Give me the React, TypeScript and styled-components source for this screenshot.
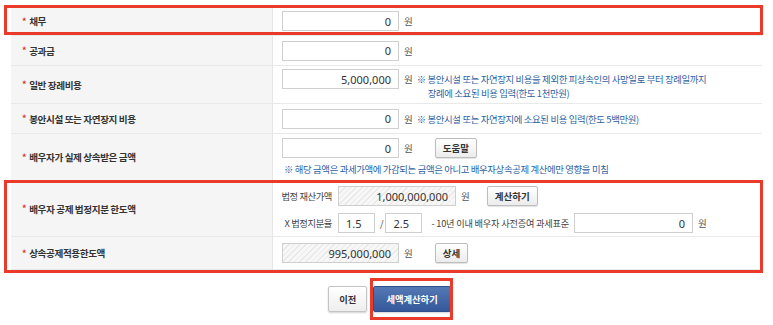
import React from 'react';
import styled, { createGlobalStyle } from 'styled-components';

const GlobalStyle = createGlobalStyle`
  body {
    margin: 0;
    background: #fff;
    font-family: "Noto Sans CJK KR", "Noto Sans", sans-serif;
    color: #333;
  }
`;

const Page = styled.div`
  position: relative;
  width: 773px;
  height: 325px;
  padding: 7px 11px 0 11px;
  box-sizing: border-box;
`;

const Table = styled.div`
  display: flex;
  flex-direction: column;
  width: 751px;
`;

const Row = styled.div<{ $h: number }>`
  display: flex;
  height: ${p => p.$h}px;
  border-bottom: 1px solid #e9e9e9;
  box-sizing: border-box;
`;

const LabelCell = styled.div`
  width: 262px;
  flex: none;
  background: #f5f5f5;
  border-right: 1px solid #e6e6e6;
  display: flex;
  align-items: center;
  padding-left: 11px;
  box-sizing: border-box;
  font-size: 9.6px;
  letter-spacing: -0.4px;
  font-weight: 700;
  color: #333;
`;

const Star = styled.span`
  color: #d9342b;
  font-size: 9px;
  margin-right: 3px;
`;

const ValueCell = styled.div`
  flex: 1;
  display: flex;
  flex-direction: column;
  justify-content: center;
  gap: 6px;
  padding-left: 9px;
`;

const Line = styled.div<{ $top?: boolean }>`
  display: flex;
  align-items: ${p => (p.$top ? 'flex-start' : 'center')};
`;

const Input = styled.div<{ $w?: number; $hatch?: boolean; $left?: boolean }>`
  width: ${p => p.$w ?? 117}px;
  height: 20px;
  box-sizing: border-box;
  border: 1px solid #cfcfcf;
  background: ${p =>
    p.$hatch
      ? 'repeating-linear-gradient(135deg, #e9e9e9 0 1px, #f7f7f7 1px 4px)'
      : '#fff'};
  display: flex;
  align-items: center;
  justify-content: ${p => (p.$left ? 'flex-start' : 'flex-end')};
  padding: 0 7px;
  font-family: "Noto Sans", sans-serif;
  font-size: 11px;
  color: #333;
  flex: none;
`;

const Unit = styled.span`
  font-size: 9.5px;
  color: #555;
  margin-left: 5px;
  line-height: 20px;
`;

const Note = styled.div<{ $indent?: boolean }>`
  font-size: 9.4px;
  letter-spacing: -0.35px;
  color: #2c5fa3;
  line-height: 14px;
  white-space: nowrap;
  padding-left: ${p => (p.$indent ? '11px' : '0')};
`;

const NoteBlock = styled.div`
  margin-left: 4px;
`;

const SmallButton = styled.div<{ $ml?: number }>`
  height: 20px;
  box-sizing: border-box;
  padding: 0 7px;
  margin-left: ${p => p.$ml ?? 0}px;
  border: 1px solid #bdbdbd;
  border-radius: 2px;
  background: linear-gradient(#ffffff, #ececec);
  box-shadow: 0 1px 1px rgba(0, 0, 0, 0.12);
  display: flex;
  align-items: center;
  font-size: 9.5px;
  font-weight: 700;
  color: #333;
`;

const SubLabel = styled.span<{ $w: number }>`
  width: ${p => p.$w}px;
  flex: none;
  font-size: 9.3px;
  letter-spacing: -0.4px;
  color: #444;
  white-space: nowrap;
  text-align: right;
  padding-right: 6px;
  box-sizing: border-box;
`;

const Text = styled.span<{ $ml?: number }>`
  font-size: 9.2px;
  letter-spacing: -0.2px;
  white-space: nowrap;
  color: #444;
  margin-left: ${p => p.$ml ?? 0}px;
  margin-right: 5px;
`;

const Actions = styled.div`
  display: flex;
  justify-content: center;
  gap: 6px;
  margin-top: 16px;
  padding-left: 6px;
`;

const ActionButton = styled.div<{ $primary?: boolean }>`
  height: 26px;
  box-sizing: border-box;
  padding: 0 ${p => (p.$primary ? 12 : 10)}px;
  border-radius: 2px;
  display: flex;
  align-items: center;
  font-size: 9.3px;
  font-weight: 700;
  color: ${p => (p.$primary ? '#fff' : '#333')};
  border: 1px solid ${p => (p.$primary ? '#2d4f8a' : '#c4c4c4')};
  background: ${p =>
    p.$primary ? 'linear-gradient(#5479b4, #34589a)' : 'linear-gradient(#fff, #eeeeee)'};
  box-shadow: 0 1px 2px rgba(0, 0, 0, 0.18);
`;

const Mark = styled.div<{ $x: number; $y: number; $w: number; $h: number }>`
  position: absolute;
  left: ${p => p.$x}px;
  top: ${p => p.$y}px;
  width: ${p => p.$w}px;
  height: ${p => p.$h}px;
  box-sizing: border-box;
  border: 3px solid #ea3b2a;
  pointer-events: none;
`;

const App: React.FC = () => {
  return (
    <Page>
      <GlobalStyle />
      <Table>
        <Row $h={29}>
          <LabelCell><Star>*</Star>채무</LabelCell>
          <ValueCell>
            <Line><Input>0</Input><Unit>원</Unit></Line>
          </ValueCell>
        </Row>
        <Row $h={30}>
          <LabelCell><Star>*</Star>공과금</LabelCell>
          <ValueCell>
            <Line><Input>0</Input><Unit>원</Unit></Line>
          </ValueCell>
        </Row>
        <Row $h={38}>
          <LabelCell><Star>*</Star>일반 장례비용</LabelCell>
          <ValueCell>
            <Line $top>
              <Input>5,000,000</Input><Unit>원</Unit>
              <NoteBlock style={{ marginTop: 3 }}>
                <Note>※ 봉안시설 또는 자연장지 비용을 제외한 피상속인의 사망일로 부터 장례일까지</Note>
                <Note $indent>장례에 소요된 비용 입력(한도 1천만원)</Note>
              </NoteBlock>
            </Line>
          </ValueCell>
        </Row>
        <Row $h={30}>
          <LabelCell><Star>*</Star>봉안시설 또는 자연장지 비용</LabelCell>
          <ValueCell>
            <Line>
              <Input>0</Input><Unit>원</Unit>
              <NoteBlock><Note>※ 봉안시설 또는 자연장지에 소요된 비용 입력(한도 5백만원)</Note></NoteBlock>
            </Line>
          </ValueCell>
        </Row>
        <Row $h={47}>
          <LabelCell><Star>*</Star>배우자가 실제 상속받은 금액</LabelCell>
          <ValueCell style={{ gap: 4 }}>
            <Line>
              <Input>0</Input><Unit>원</Unit>
              <SmallButton $ml={22}>도움말</SmallButton>
            </Line>
            <Note style={{ paddingLeft: 2 }}>※ 해당 금액은 과세가액에 가감되는 금액은 아니고 배우자상속공제 계산에만 영향을 미침</Note>
          </ValueCell>
        </Row>
        <Row $h={56}>
          <LabelCell><Star>*</Star>배우자 공제 법정지분 한도액</LabelCell>
          <ValueCell style={{ paddingLeft: 0, gap: 7, paddingTop: 2 }}>
            <Line>
              <SubLabel $w={65}>법정 재산가액</SubLabel>
              <Input $w={118} $hatch>1,000,000,000</Input><Unit>원</Unit>
              <SmallButton $ml={17}>계산하기</SmallButton>
            </Line>
            <Line>
              <SubLabel $w={65}>X 법정지분율</SubLabel>
              <Input $w={37} $left>1.5</Input>
              <Text $ml={5} style={{ marginRight: 2 }}>/</Text>
              <Input $w={37} $left>2.5</Input>
              <Text $ml={9}>- 10년 이내 배우자 사전증여 과세표준</Text>
              <Input $w={119}>0</Input><Unit>원</Unit>
            </Line>
          </ValueCell>
        </Row>
        <Row $h={33}>
          <LabelCell><Star>*</Star>상속공제적용한도액</LabelCell>
          <ValueCell>
            <Line>
              <Input $hatch>995,000,000</Input><Unit>원</Unit>
              <SmallButton $ml={22}>상세</SmallButton>
            </Line>
          </ValueCell>
        </Row>
      </Table>
      <Actions>
        <ActionButton>이전</ActionButton>
        <ActionButton $primary>세액계산하기</ActionButton>
      </Actions>
      <Mark $x={4} $y={5} $w={759} $h={30} />
      <Mark $x={4} $y={180} $w={759} $h={93} />
      <Mark $x={370} $y={278} $w={83} $h={42} />
    </Page>
  );
};

export default App;
